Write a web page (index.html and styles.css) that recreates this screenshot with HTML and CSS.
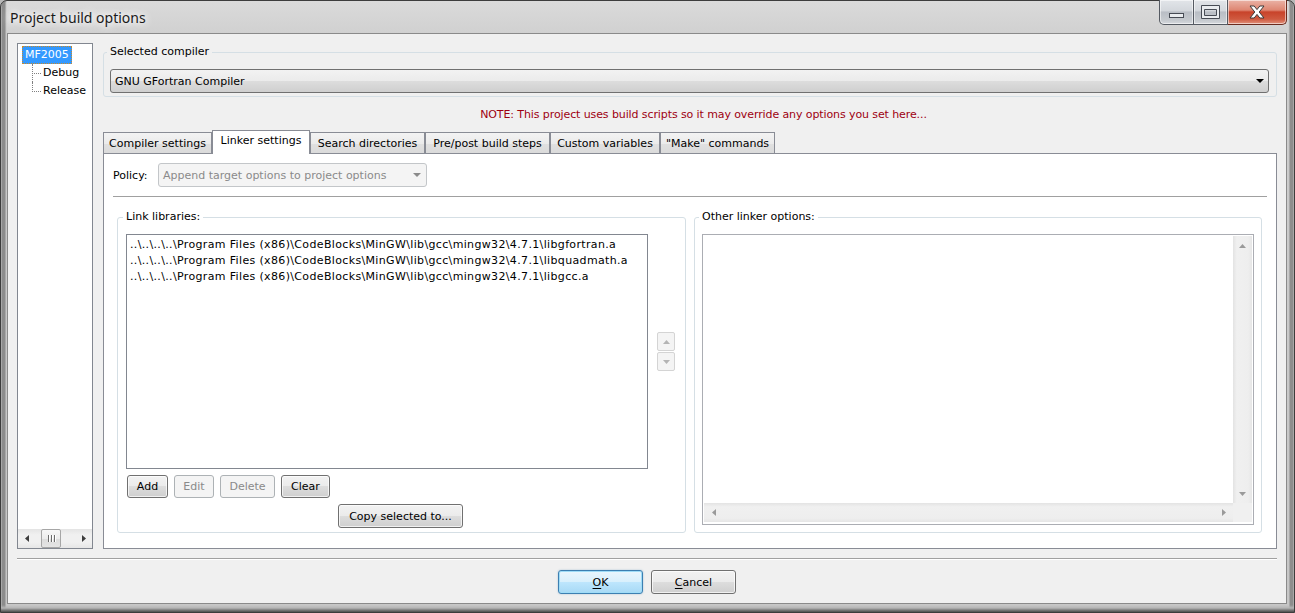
FILE: index.html
```html
<!DOCTYPE html>
<html>
<head>
<meta charset="utf-8">
<title>Project build options</title>
<link rel="stylesheet" href="styles.css">
</head>
<body>
<div class="window">
  <div class="titlebar">
    <div class="title">Project build options</div>
    <div class="caption">
      <div class="cbtn cmin"><svg width="16" height="6" viewBox="0 0 16 6"><rect x="0.5" y="0.5" width="14" height="4" fill="#e9ecef" stroke="#474c55"/></svg></div>
      <div class="cbtn cmax"><svg width="19" height="14" viewBox="0 0 19 14"><path d="M0.5 0.5H18.5V13.5H0.5Z M3.5 4.5V10.5H15.5V4.5Z" fill="#e9ecef" fill-rule="evenodd" stroke="#474c55"/></svg></div>
      <div class="cbtn cclose"><svg width="16" height="14" viewBox="0 0 16 14"><path d="M1 1H5.2L8 4.6L10.8 1H15L10.2 7L15 13H10.8L8 9.4L5.2 13H1L5.8 7Z" fill="#ffffff" stroke="#3a3a3a" stroke-width="1" stroke-linejoin="round"/></svg></div>
    </div>
  </div>
  <div class="client">
    <div class="main">
      <div class="tree">
        <div class="tree-body">
          <div class="node"><span class="node-label selected">MF2005</span></div>
          <div class="children">
            <div class="node child"><span class="node-label">Debug</span></div>
            <div class="node child last"><span class="node-label">Release</span></div>
          </div>
        </div>
        <div class="hscroll">
          <div class="sb-btn"><svg width="4" height="7" viewBox="0 0 4 7"><polygon points="4,0 0,3.5 4,7" fill="#3d3d3d"/></svg></div>
          <div class="sb-track"><div class="sb-thumb"><span></span><span></span><span></span></div></div>
          <div class="sb-btn"><svg width="4" height="7" viewBox="0 0 4 7"><polygon points="0,0 4,3.5 0,7" fill="#3d3d3d"/></svg></div>
        </div>
      </div>
      <div class="right">
        <fieldset class="group compiler">
          <legend>Selected compiler</legend>
          <div class="combo">
            <span>GNU GFortran Compiler</span>
            <svg width="8" height="4" viewBox="0 0 8 4"><polygon points="0,0 8,0 4,4" fill="#000"/></svg>
          </div>
        </fieldset>
        <div class="note">NOTE: This project uses build scripts so it may override any options you set here...</div>
        <div class="tabs">
          <div class="tab tab-compiler">Compiler settings</div>
          <div class="tab active tab-linker">Linker settings</div>
          <div class="tab tab-search">Search directories</div>
          <div class="tab tab-prepost">Pre/post build steps</div>
          <div class="tab tab-custom">Custom variables</div>
          <div class="tab tab-make">&quot;Make&quot; commands</div>
        </div>
        <div class="panel">
          <div class="policy-row">
            <span class="policy-label">Policy:</span>
            <div class="combo disabled policy-combo">
              <span>Append target options to project options</span>
              <svg width="8" height="4" viewBox="0 0 8 4"><polygon points="0,0 8,0 4,4" fill="#8a8a8a"/></svg>
            </div>
          </div>
          <div class="hsep"></div>
          <div class="groups">
            <fieldset class="group libs">
              <legend>Link libraries:</legend>
              <div class="libs-row">
                <div class="listbox">
                  <div class="item">..\..\..\..\Program Files (x86)\CodeBlocks\MinGW\lib\gcc\mingw32\4.7.1\libgfortran.a</div>
                  <div class="item">..\..\..\..\Program Files (x86)\CodeBlocks\MinGW\lib\gcc\mingw32\4.7.1\libquadmath.a</div>
                  <div class="item">..\..\..\..\Program Files (x86)\CodeBlocks\MinGW\lib\gcc\mingw32\4.7.1\libgcc.a</div>
                </div>
                <div class="spin">
                  <div class="spin-btn"><svg width="7" height="4" viewBox="0 0 7 4"><polygon points="0,4 3.5,0 7,4" fill="#b4b4b4"/></svg></div>
                  <div class="spin-btn"><svg width="7" height="4" viewBox="0 0 7 4"><polygon points="0,0 7,0 3.5,4" fill="#b4b4b4"/></svg></div>
                </div>
              </div>
              <div class="btn-row">
                <button class="btn w-add">Add</button>
                <button class="btn disabled w-edit">Edit</button>
                <button class="btn disabled w-delete">Delete</button>
                <button class="btn w-clear">Clear</button>
              </div>
              <button class="btn copy">Copy selected to...</button>
            </fieldset>
            <fieldset class="group other">
              <legend>Other linker options:</legend>
              <div class="textarea">
                <div class="ta-body"></div>
                <div class="vscroll">
                  <div class="sb-btn v"><svg width="7" height="4" viewBox="0 0 7 4"><polygon points="0,4 3.5,0 7,4" fill="#9a9a9a"/></svg></div>
                  <div class="vtrack"></div>
                  <div class="sb-btn v"><svg width="7" height="4" viewBox="0 0 7 4"><polygon points="0,0 7,0 3.5,4" fill="#9a9a9a"/></svg></div>
                </div>
                <div class="hscroll2">
                  <div class="sb-btn h"><svg width="4" height="7" viewBox="0 0 4 7"><polygon points="4,0 0,3.5 4,7" fill="#9a9a9a"/></svg></div>
                  <div class="htrack"></div>
                  <div class="sb-btn h"><svg width="4" height="7" viewBox="0 0 4 7"><polygon points="0,0 4,3.5 0,7" fill="#9a9a9a"/></svg></div>
                </div>
                <div class="corner"></div>
              </div>
            </fieldset>
          </div>
        </div>
      </div>
    </div>
    <div class="dlg-sep"></div>
    <div class="dlg-buttons">
      <button class="btn dlg default"><span><u>O</u>K</span></button>
      <button class="btn dlg"><span><u>C</u>ancel</span></button>
    </div>
  </div>
</div>
</body>
</html>
```

FILE: styles.css
```css
* { box-sizing: border-box; }
html, body { margin: 0; padding: 0; }
body {
  width: 1295px;
  height: 613px;
  overflow: hidden;
  background: #b8b8b8;
  font-family: "DejaVu Sans", sans-serif;
  font-size: 11px;
  color: #000;
}

.window {
  width: 1295px;
  height: 613px;
  border: 1px solid #3c3c3c;
  border-radius: 7px 7px 0 0;
  padding: 0 7px 8px 6px;
  display: flex;
  flex-direction: column;
  background:
    linear-gradient(to top, #4f4f4f 0, #7d7d7d 2px, #b5b5b5 4px, rgba(200,200,200,0) 7px),
    linear-gradient(to right, #c4c4c4 0, #8c8c8c 1px, #8c8c8c 4px, #c6c6c6 5px, rgba(200,200,200,0) 6px, rgba(200,200,200,0) calc(100% - 6px), #c6c6c6 calc(100% - 5px), #8d8d8d calc(100% - 4px), #8d8d8d calc(100% - 1px), #c4c4c4 100%),
    linear-gradient(#dadada, #d0d0d0 34px, #c7c7c7);
}

.titlebar {
  height: 32px;
  flex: none;
  display: flex;
  justify-content: space-between;
  align-items: flex-start;
}
.title {
  font-family: "Noto Sans", sans-serif;
  font-size: 14px;
  color: #1a1a1a;
  padding: 8px 0 0 3px;
  line-height: 18px;
  text-shadow: 0 0 6px #fff, 0 0 10px #fff, 0 0 14px #fff;
}
.caption {
  display: flex;
  margin-top: -1px;
}
.cbtn {
  height: 25px;
  border: 1px solid #555a62;
  border-top: none;
  display: flex;
  align-items: center;
  justify-content: center;
  background: linear-gradient(#e2e5e9, #d3d7dc 45%, #b9bec5 50%, #c6cacf 85%, #d6d9dd);
  box-shadow: inset 0 0 0 1px rgba(255,255,255,.55);
}
.cmin { width: 35px; border-radius: 0 0 0 5px; align-items: flex-end; padding-bottom: 5px; }
.cmax { width: 34px; border-left: none; }
.cclose {
  width: 59px;
  border-left: none;
  border-radius: 0 0 5px 0;
  border-color: #6b2a1d;
  background: linear-gradient(#eab3a6, #de8672 42%, #c8432a 50%, #cf5a40 80%, #e1927c);
}

.client {
  flex: 1;
  border: 1px solid #8a8a8a;
  background: #f0f0f0;
  padding: 9px 9px 9px 9px;
  display: flex;
  flex-direction: column;
  min-height: 0;
}
.main {
  flex: 1;
  display: flex;
  gap: 10px;
  min-height: 0;
}

/* tree */
.tree {
  width: 76px;
  flex: none;
  border: 1px solid #828790;
  background: #fff;
  display: flex;
  flex-direction: column;
}
.tree-body {
  flex: 1;
  padding: 2px 0 0 4px;
}
.node {
  height: 18px;
  line-height: 16px;
  white-space: nowrap;
}
.node-label {
  display: inline-block;
  height: 18px;
  padding: 0 2px 0 2px;
  border: 1px solid transparent;
}
.node-label.selected {
  background: #3399ff;
  color: #fff;
  border: 1px dotted #c98a2a;
}
.children { margin-left: 10px; }
.child {
  position: relative;
  padding-left: 8px;
}
.child::before {
  content: "";
  position: absolute;
  left: 0;
  top: 0;
  width: 8px;
  height: 9px;
  border-left: 1px dotted #808080;
  border-bottom: 1px dotted #808080;
}
.child:not(.last)::after {
  content: "";
  position: absolute;
  left: 0;
  top: 9px;
  bottom: 0;
  border-left: 1px dotted #808080;
}

.hscroll {
  height: 19px;
  display: flex;
  background: linear-gradient(#e4e4e4, #f0f0f0 30%, #f0f0f0 70%, #e6e6e6);
}
.sb-btn {
  display: flex;
  align-items: center;
  justify-content: center;
  flex: none;
}
.hscroll .sb-btn { width: 17px; }
.sb-track { flex: 1; padding: 0 0 0 6px; display: flex; }
.sb-thumb {
  width: 20px;
  height: 19px;
  border: 1px solid #a6a6a6;
  border-radius: 2px;
  background: linear-gradient(#f6f6f6, #ececec 50%, #dcdcdc 51%, #e4e4e4);
  display: flex;
  align-items: center;
  justify-content: center;
  gap: 2px;
}
.sb-thumb span {
  width: 1px;
  height: 7px;
  background: #6c6c6c;
  box-shadow: 1px 0 0 #fff;
}

/* right side */
.right {
  flex: 1;
  min-width: 0;
  display: flex;
  flex-direction: column;
}
.group {
  border: 1px solid #d5dfe5;
  border-radius: 3px;
  margin: 0;
  min-width: 0;
}
.group legend {
  padding: 0 3px;
  margin-left: -3px;
  line-height: 14px;
}
.compiler {
  margin-top: 2px;
  padding: 10px 7px 3px 6px;
}

.combo {
  height: 24px;
  border: 1px solid #707070;
  border-radius: 3px;
  background: linear-gradient(#f2f2f2, #ebebeb 49%, #dddddd 50%, #cfcfcf);
  display: flex;
  align-items: center;
  justify-content: space-between;
  padding: 0 4px 0 4px;
  white-space: nowrap;
}
.combo.disabled {
  border-color: #c3c6c9;
  background: #f4f4f4;
  color: #8a8a8a;
}

.note {
  margin-top: 11px;
  line-height: 14px;
  color: #9e0010;
  text-align: center;
  padding-left: 27px;
  letter-spacing: -0.1px;
}

.tabs {
  display: flex;
  align-items: flex-end;
  height: 24px;
  margin-top: 8px;
  margin-bottom: -1px;
}
.tab {
  height: 22px;
  border: 1px solid #898c95;
  border-bottom: none;
  background: linear-gradient(#f3f3f3, #ebebeb 50%, #e0e0e0 51%, #dadada);
  padding: 3px 0 0 0;
  line-height: 16px;
  text-align: center;
  white-space: nowrap;
  flex: none;
}
.tab.active {
  height: 24px;
  background: #fff;
  position: relative;
  z-index: 1;
  padding-top: 2px;
}
.tab-compiler { width: 109px; }
.tab-linker { width: 98px; }
.tab-search { width: 115px; }
.tab-prepost { width: 125px; }
.tab-custom { width: 110px; }
.tab-make { width: 115px; }

.panel {
  flex: 1;
  min-height: 0;
  border: 1px solid #898c95;
  background: #fff;
  padding: 9px 9px 15px 9px;
  display: flex;
  flex-direction: column;
}
.policy-row {
  display: flex;
  align-items: center;
  height: 24px;
}
.policy-label { width: 45px; }
.policy-combo { width: 269px; padding-left: 4px; padding-right: 5px; }

.hsep {
  margin-top: 9px;
  height: 1px;
  background: #a0a0a0;
  flex: none;
}

.groups {
  flex: 1;
  min-height: 0;
  display: flex;
  gap: 8px;
  margin: 13px 5px 0 4px;
}
.groups .group { display: flex; flex-direction: column; }
.group legend { flex: none; }

.libs { flex: none; width: 569px; padding: 10px 10px 4px 8px; }
.libs-row {
  flex: 1;
  min-height: 0;
  display: flex;
  align-items: center;
  gap: 9px;
}
.listbox {
  flex: 1;
  min-width: 0;
  align-self: stretch;
  border: 1px solid #828790;
  background: #fff;
  padding: 2px 3px 0 3px;
  line-height: 16px;
  white-space: nowrap;
  overflow: hidden;
  letter-spacing: 0.35px;
}
.spin { width: 18px; flex: none; display: flex; flex-direction: column; gap: 1px; }
.spin-btn {
  height: 19px;
  border: 1px solid #d4d4d4;
  border-radius: 2px;
  background: #f4f4f4;
  display: flex;
  align-items: center;
  justify-content: center;
}

.btn {
  font: inherit;
  color: #000;
  height: 23px;
  padding: 0;
  border: 1px solid #707070;
  border-radius: 3px;
  background: linear-gradient(#f2f2f2, #ebebeb 49%, #dddddd 50%, #cfcfcf);
  box-shadow: inset 0 0 0 1px rgba(255,255,255,.7);
  display: flex;
  align-items: center;
  justify-content: center;
  white-space: nowrap;
}
.btn.disabled {
  border-color: #adb2b5;
  background: #f4f4f4;
  color: #8a8a8a;
  box-shadow: none;
}
.btn-row {
  display: flex;
  gap: 6px;
  margin-top: 6px;
  padding-left: 1px;
}
.w-add { width: 41px; }
.w-edit { width: 40px; }
.w-delete { width: 55px; }
.w-clear { width: 49px; }
.copy {
  width: 125px;
  height: 24px;
  align-self: center;
  margin-top: 6px;
}

.other { flex: 1; min-width: 0; padding: 10px 7px 7px 7px; }
.textarea {
  flex: 1;
  min-height: 0;
  border: 1px solid #abadb3;
  background: #fff;
  padding: 1px 1px 2px 1px;
  display: grid;
  grid-template-columns: 1fr 19px;
  grid-template-rows: 1fr 19px;
}
.vscroll {
  display: flex;
  flex-direction: column;
  background: linear-gradient(to right, #e3e3e3, #f0f0f0 20%, #eeeeee 80%, #e6e6e6);
}
.vscroll .sb-btn { height: 19px; }
.vtrack { flex: 1; }
.hscroll2 {
  display: flex;
  background: linear-gradient(#e3e3e3, #f0f0f0 20%, #eeeeee 80%, #e6e6e6);
}
.hscroll2 .sb-btn { width: 19px; }
.htrack { flex: 1; }
.corner { background: #f0f0f0; }

.dlg-sep {
  flex: none;
  margin-top: 9px;
  height: 2px;
  border-top: 1px solid #a0a0a0;
  border-bottom: 1px solid #fff;
}
.dlg-buttons {
  flex: none;
  display: flex;
  justify-content: center;
  gap: 8px;
  margin-top: 10px;
}
.btn.dlg { width: 85px; height: 24px; }
.btn.dlg u { text-decoration: underline; text-underline-offset: 2px; }
.btn.default {
  border-color: #3c7fb1;
  background: linear-gradient(#eaf6fd, #d9f0fc 49%, #bee6fd 50%, #a7d9f5);
  box-shadow: inset 0 0 0 1px #9fdcf7, 0 0 2px rgba(60,127,177,.4);
}
```
